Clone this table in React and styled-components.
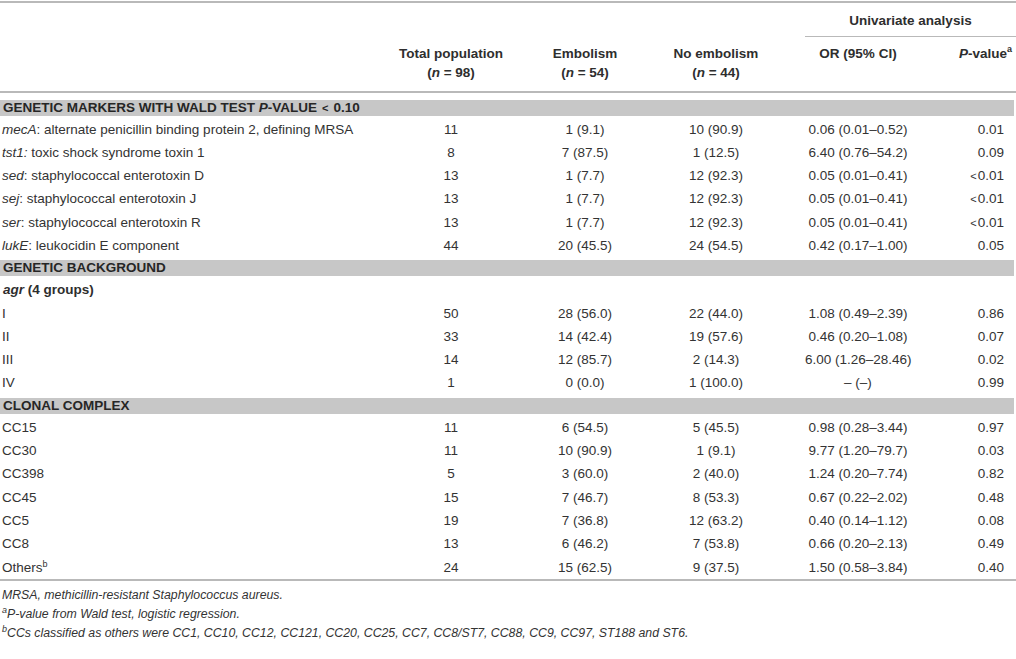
import React from "react";
import styled, { createGlobalStyle } from "styled-components";

const Global = createGlobalStyle`
  html, body { margin: 0; padding: 0; background: #fff; }
  body { font-family: "Liberation Sans", Arial, Helvetica, sans-serif; color: #333; }
`;

const COLS = "395px 112px 156px 142px 106px 1fr";

const Page = styled.div`
  width: 1016px;
  padding-top: 1px;
  font-size: 13.5px;
`;

const Table = styled.div`
  border-top: 2px solid #b9b9b9;
  border-bottom: 2px solid #b9b9b9;
`;

const Head = styled.div`
  display: grid;
  grid-template-columns: ${COLS};
  grid-template-rows: auto auto;
  border-bottom: 2px solid #b9b9b9;
  font-weight: bold;
  line-height: 19px;
  color: #2e2e2e;
`;

const Spanner = styled.div`
  grid-column: 5 / 7;
  grid-row: 1;
  text-align: center;
  padding: 7.5px 0 6px;
  border-bottom: 1px solid #b9b9b9;
`;

const HeadCell = styled.div`
  grid-row: 2;
  grid-column: ${(p) => p.$col};
  text-align: ${(p) => p.$align || "center"};
  padding: 7.5px ${(p) => p.$pr || 0}px 8.5px 0;
`;

const Row = styled.div`
  display: grid;
  grid-template-columns: ${COLS};
  height: 23.3px;
  line-height: 23.3px;
  white-space: nowrap;
`;

const Label = styled.div`
  padding-left: ${(p) => (p.$bold ? 3 : 2)}px;
  font-weight: ${(p) => (p.$bold ? "bold" : "normal")};
  color: ${(p) => (p.$bold ? "#2e2e2e" : "#333")};
`;

const Cell = styled.div`
  text-align: ${(p) => p.$align || "center"};
  padding-right: ${(p) => p.$pr || 0}px;
`;

const Band = styled.div`
  margin: ${(p) => (p.$first ? 7 : 3)}px 2px 2px 0;
  height: 16px;
  line-height: 16px;
  background: #c7c7c7;
  padding-left: 3px;
  font-weight: bold;
  color: #262626;
  white-space: nowrap;
`;

const Lt = styled.span`
  font-size: 11px;
  margin: 0 5px;
`;

const Sup = styled.sup`
  font-size: 9px;
  line-height: 0;
  vertical-align: ${(p) => (p.$up ? "6px" : "5px")};
`;

const Notes = styled.div`
  padding: 5px 0 0 2px;
  font-size: 12.3px;
  font-style: italic;
  line-height: 19px;
  color: #333;
`;

const Note = styled.div`
  white-space: nowrap;
`;

const LtSmall = styled.span`
  font-size: 11px;
  margin-right: 1px;
`;

const markers = [
  [<><i>mecA</i>: alternate penicillin binding protein 2, defining MRSA</>, "11", "1 (9.1)", "10 (90.9)", "0.06 (0.01–0.52)", "0.01"],
  [<><i>tst1:</i> toxic shock syndrome toxin 1</>, "8", "7 (87.5)", "1 (12.5)", "6.40 (0.76–54.2)", "0.09"],
  [<><i>sed</i>: staphylococcal enterotoxin D</>, "13", "1 (7.7)", "12 (92.3)", "0.05 (0.01–0.41)", "<0.01"],
  [<><i>sej</i>: staphylococcal enterotoxin J</>, "13", "1 (7.7)", "12 (92.3)", "0.05 (0.01–0.41)", "<0.01"],
  [<><i>ser</i>: staphylococcal enterotoxin R</>, "13", "1 (7.7)", "12 (92.3)", "0.05 (0.01–0.41)", "<0.01"],
  [<><i>lukE</i>: leukocidin E component</>, "44", "20 (45.5)", "24 (54.5)", "0.42 (0.17–1.00)", "0.05"],
];

const agr = [
  ["I", "50", "28 (56.0)", "22 (44.0)", "1.08 (0.49–2.39)", "0.86"],
  ["II", "33", "14 (42.4)", "19 (57.6)", "0.46 (0.20–1.08)", "0.07"],
  ["III", "14", "12 (85.7)", "2 (14.3)", "6.00 (1.26–28.46)", "0.02"],
  ["IV", "1", "0 (0.0)", "1 (100.0)", "– (–)", "0.99"],
];

const clonal = [
  ["CC15", "11", "6 (54.5)", "5 (45.5)", "0.98 (0.28–3.44)", "0.97"],
  ["CC30", "11", "10 (90.9)", "1 (9.1)", "9.77 (1.20–79.7)", "0.03"],
  ["CC398", "5", "3 (60.0)", "2 (40.0)", "1.24 (0.20–7.74)", "0.82"],
  ["CC45", "15", "7 (46.7)", "8 (53.3)", "0.67 (0.22–2.02)", "0.48"],
  ["CC5", "19", "7 (36.8)", "12 (63.2)", "0.40 (0.14–1.12)", "0.08"],
  ["CC8", "13", "6 (46.2)", "7 (53.8)", "0.66 (0.20–2.13)", "0.49"],
  [<>Others<Sup>b</Sup></>, "24", "15 (62.5)", "9 (37.5)", "1.50 (0.58–3.84)", "0.40"],
];

function PValue({ v }) {
  if (v.startsWith("<")) {
    return (
      <>
        <LtSmall>&lt;</LtSmall>
        {v.slice(1)}
      </>
    );
  }
  return v;
}

function DataRow({ r }) {
  return (
    <Row>
      <Label>{r[0]}</Label>
      <Cell>{r[1]}</Cell>
      <Cell>{r[2]}</Cell>
      <Cell $pr={36}>{r[3]}</Cell>
      <Cell>{r[4]}</Cell>
      <Cell $align="right" $pr={12}>
        <PValue v={r[5]} />
      </Cell>
    </Row>
  );
}

export default function App() {
  return (
    <Page>
      <Global />
      <Table>
        <Head>
          <Spanner>Univariate analysis</Spanner>
          <HeadCell $col={1} />
          <HeadCell $col={2}>
            Total population
            <br />(<i>n</i> = 98)
          </HeadCell>
          <HeadCell $col={3}>
            Embolism
            <br />(<i>n</i> = 54)
          </HeadCell>
          <HeadCell $col={4} $pr={36}>
            No embolism
            <br />(<i>n</i> = 44)
          </HeadCell>
          <HeadCell $col={5}>OR (95% CI)</HeadCell>
          <HeadCell $col={6} $align="right" $pr={4}>
            <i>P</i>-value<Sup $up>a</Sup>
          </HeadCell>
        </Head>

        <Band $first>
          GENETIC MARKERS WITH WALD TEST <i>P</i>-VALUE<Lt>&lt;</Lt>0.10
        </Band>
        {markers.map((r, i) => (
          <DataRow key={"m" + i} r={r} />
        ))}

        <Band>GENETIC BACKGROUND</Band>
        <Row>
          <Label $bold>
            <i>agr</i> (4 groups)
          </Label>
        </Row>
        {agr.map((r, i) => (
          <DataRow key={"a" + i} r={r} />
        ))}

        <Band>CLONAL COMPLEX</Band>
        {clonal.map((r, i) => (
          <DataRow key={"c" + i} r={r} />
        ))}
      </Table>
      <Notes>
        <Note>MRSA, methicillin-resistant Staphylococcus aureus.</Note>
        <Note>
          <Sup>a</Sup>P-value from Wald test, logistic regression.
        </Note>
        <Note>
          <Sup>b</Sup>CCs classified as others were CC1, CC10, CC12, CC121, CC20, CC25, CC7, CC8/ST7, CC88, CC9, CC97, ST188 and ST6.
        </Note>
      </Notes>
    </Page>
  );
}
